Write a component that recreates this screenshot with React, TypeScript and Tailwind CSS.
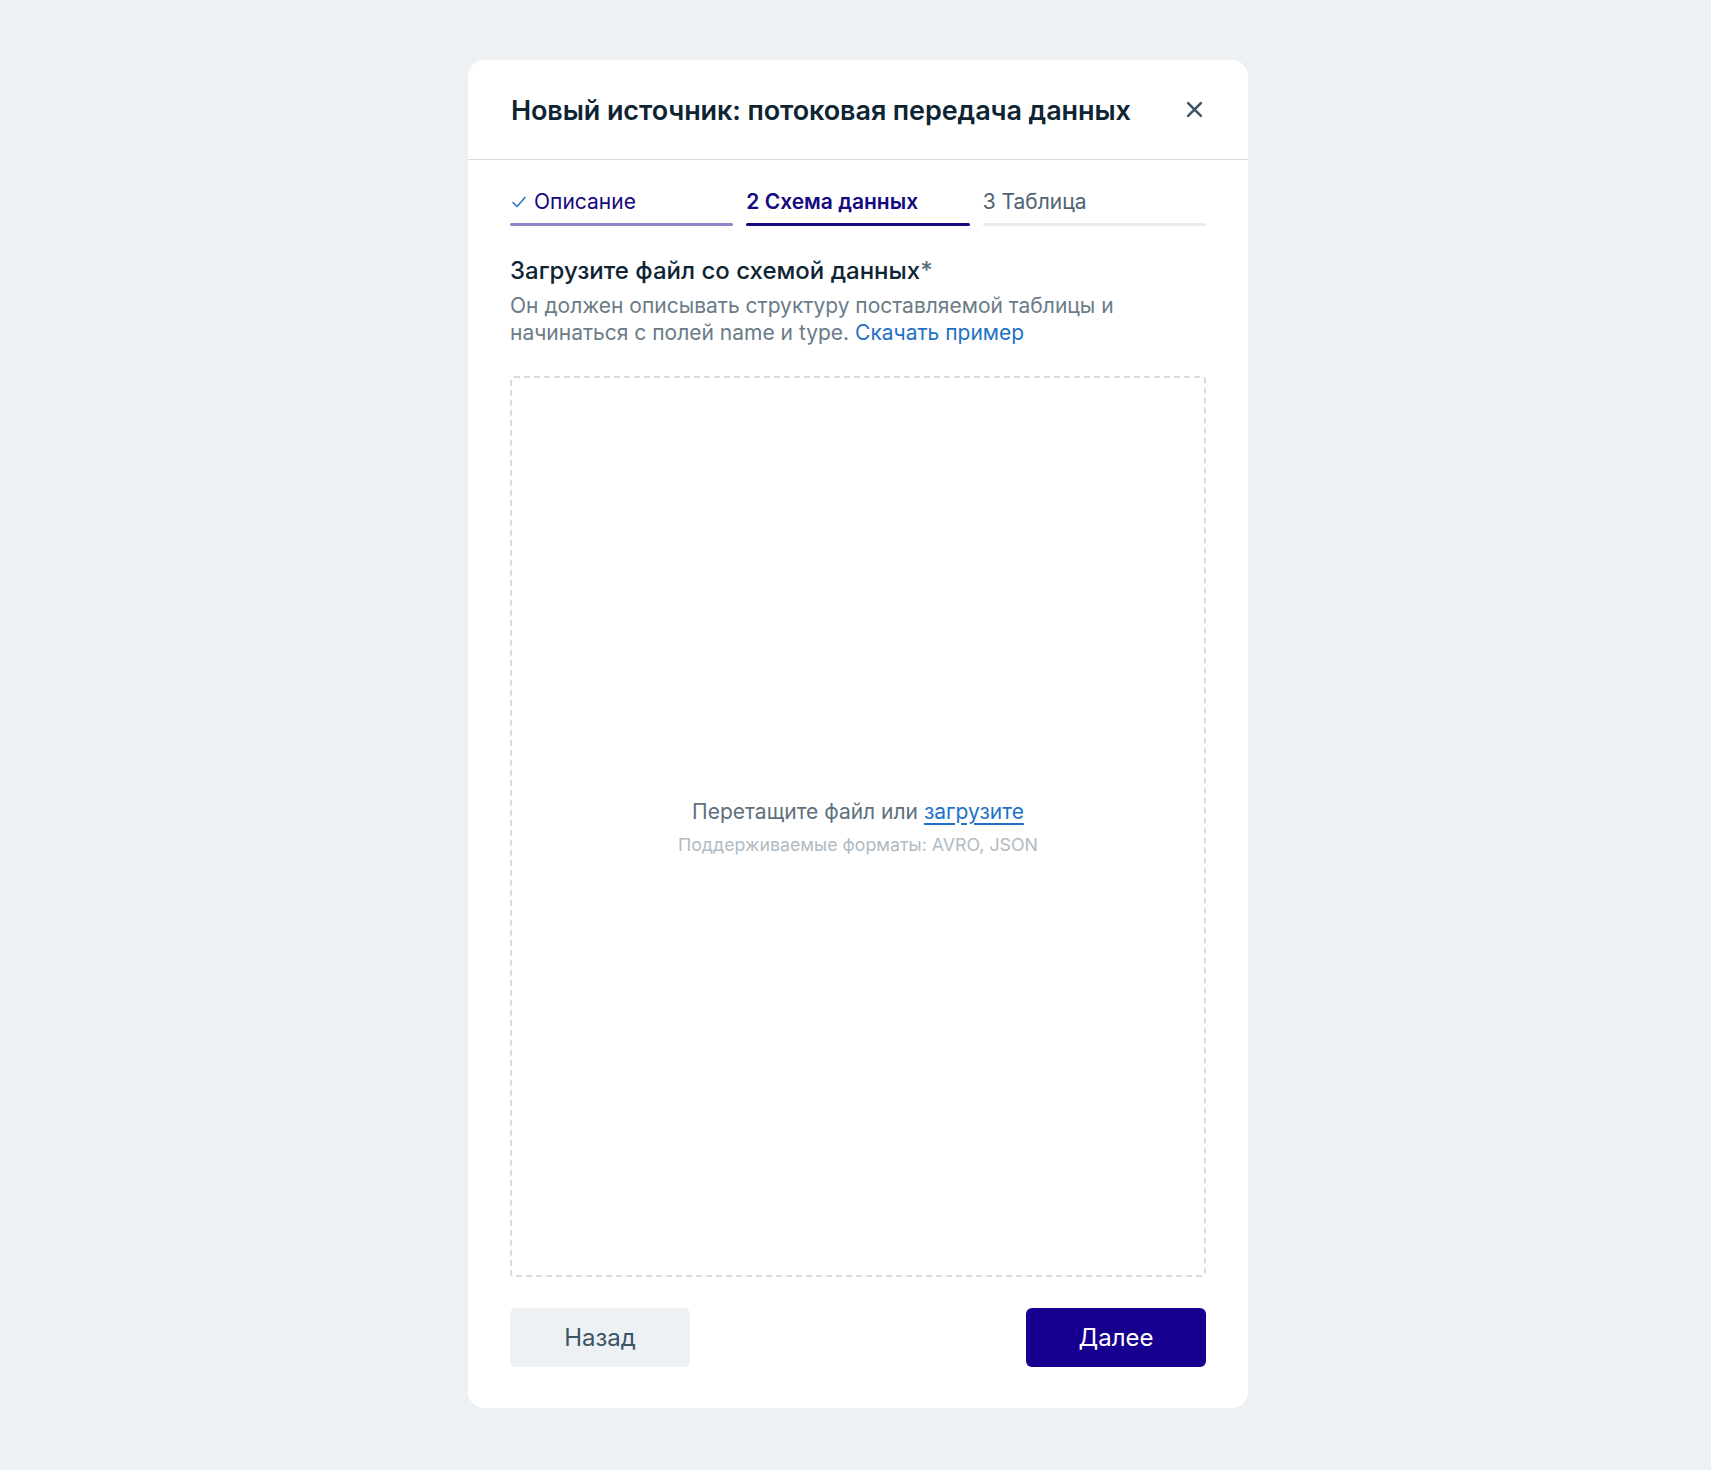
import React from "react";

export default function App() {
  return (
    <div
      className="min-h-[1470px] w-full bg-[#edf1f4] flex justify-center pt-[60px] pl-[5px]"
      style={{ fontFamily: "Inter, 'Noto Sans', sans-serif" }}
    >
      <div className="w-[780px] h-[1348px] bg-white rounded-[16px] flex flex-col">
        {/* Header */}
        <div className="h-[99px] flex items-center justify-between pl-[43px] pr-[42px] border-b border-[#d6dee4] shrink-0 box-content">
          <h1 className="pt-[2px] text-[27px] leading-[34px] font-semibold text-[#0e2433] tracking-[-0.1px]">
            Новый источник: потоковая передача данных
          </h1>
          <button className="w-6 h-6 flex items-center justify-center text-[#3b5464]">
            <svg width="17" height="17" viewBox="0 0 16 16" fill="none">
              <path
                d="M2 2L14 14M14 2L2 14"
                stroke="currentColor"
                strokeWidth="2.4"
                strokeLinecap="round"
              />
            </svg>
          </button>
        </div>

        <div className="px-[42px] flex flex-col flex-1">
          {/* Tabs */}
          <div className="grid grid-cols-3 gap-[13px] pt-[28px]">
            <div className="flex flex-col">
              <div className="h-7 flex items-center gap-[7px] text-[21px] text-[#14097e]">
                <svg width="16" height="16" viewBox="0 0 16 16" fill="none" className="ml-[1px]">
                  <path
                    d="M2 8.5L6 12.5L14 3.5"
                    stroke="#2f74c4"
                    strokeWidth="1.6"
                    strokeLinecap="round"
                    strokeLinejoin="round"
                  />
                </svg>
                <span>Описание</span>
              </div>
              <div className="mt-[7px] h-[3px] rounded-full bg-[#8b87c9]" />
            </div>
            <div className="flex flex-col">
              <div className="h-7 flex items-center text-[21px] font-semibold text-[#14097e]">
                2 Схема данных
              </div>
              <div className="mt-[7px] h-[3px] rounded-full bg-[#14097e]" />
            </div>
            <div className="flex flex-col">
              <div className="h-7 flex items-center text-[21px] text-[#4f6373]">
                3 Таблица
              </div>
              <div className="mt-[7px] h-[3px] rounded-full bg-[#e9edf0]" />
            </div>
          </div>

          {/* Heading */}
          <h2 className="mt-[30px] text-[24px] leading-[30px] font-medium text-[#0e2433]">
            Загрузите файл со схемой данных<span className="text-[#5b6e7c]">*</span>
          </h2>
          <p className="mt-[6px] text-[21px] leading-[27px] text-[#6b7b87] pr-[40px]">
            Он должен описывать структуру поставляемой таблицы и начинаться с полей name и type.{" "}
            <a className="text-[#1f72c6] cursor-pointer">Скачать пример</a>
          </p>

          {/* Dropzone */}
          <div className="mt-[30px] h-[901px] border-2 border-dashed border-[#d5dce2] rounded-[4px] flex flex-col items-center justify-center">
            <div className="text-[21px] leading-[28px] text-[#5e707d]">
              Перетащите файл или{" "}
              <a className="text-[#1f72c6] underline underline-offset-[4px] decoration-[1.5px] cursor-pointer">
                загрузите
              </a>
            </div>
            <div className="mt-[8px] text-[17.8px] leading-[22px] text-[#b1bbc3]">
              Поддерживаемые форматы: AVRO, JSON
            </div>
          </div>

          {/* Buttons */}
          <div className="mt-[31px] flex justify-between">
            <button className="w-[180px] h-[59px] rounded-[6px] bg-[#edf1f4] text-[24px] text-[#3b5464]">
              Назад
            </button>
            <button className="w-[180px] h-[59px] rounded-[6px] bg-[#170090] text-[24px] text-white">
              Далее
            </button>
          </div>
        </div>
      </div>
    </div>
  );
}
